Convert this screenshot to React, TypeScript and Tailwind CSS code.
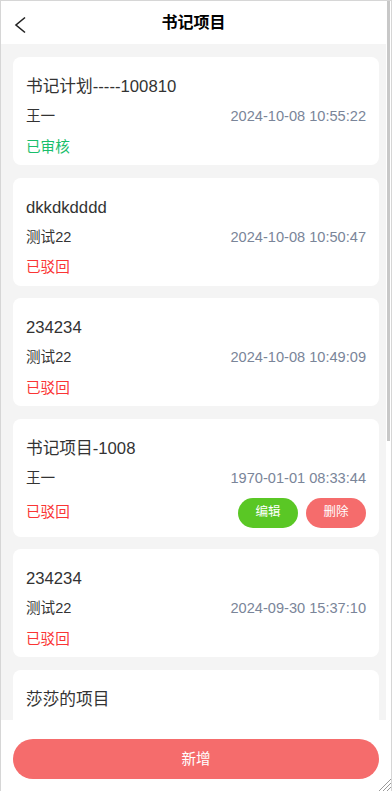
import { Fragment } from "react";

type Item = {
  id: number;
  title: string;
  name: string;
  time: string;
  status: "approved" | "rejected";
  editable?: boolean;
};

const items: Item[] = [
  { id: 1, title: "书记计划-----100810", name: "王一", time: "2024-10-08 10:55:22", status: "approved" },
  { id: 2, title: "dkkdkdddd", name: "测试22", time: "2024-10-08 10:50:47", status: "rejected" },
  { id: 3, title: "234234", name: "测试22", time: "2024-10-08 10:49:09", status: "rejected" },
  { id: 4, title: "书记项目-1008", name: "王一", time: "1970-01-01 08:33:44", status: "rejected", editable: true },
  { id: 5, title: "234234", name: "测试22", time: "2024-09-30 15:37:10", status: "rejected" },
  { id: 6, title: "莎莎的项目", name: "", time: "", status: "rejected" },
];

function StatusText({ status }: { status: Item["status"] }) {
  return status === "approved" ? (
    <span className="text-[14.6px] text-[#19be6b]">已审核</span>
  ) : (
    <span className="text-[14.6px] text-[#fa3534]">已驳回</span>
  );
}

function ProjectCard({ item }: { item: Item }) {
  return (
    <div
      className={
        item.editable
          ? "w-[366px] shrink-0 rounded-[8px] bg-white px-[13px] pt-[15px] pb-[5px]"
          : "w-[366px] shrink-0 rounded-[8px] bg-white px-[13px] pt-[15px] pb-[2px]"
      }
    >
      <div className="flex h-[30px] items-center text-[16.7px] text-[#333]">{item.title}</div>
      <div className="flex h-[30px] items-center justify-between">
        <span className="text-[14.6px] text-[#333]">{item.name}</span>
        <span className="text-[14.6px] text-[#7a8599]">{item.time}</span>
      </div>
      {item.editable ? (
        <div className="flex h-[38px] items-center justify-between">
          <StatusText status={item.status} />
          <div className="flex gap-[8px]">
            <button className="h-[30px] w-[60px] rounded-full bg-[#5ac725] text-[12.5px] text-white">
              编辑
            </button>
            <button className="h-[30px] w-[60px] rounded-full bg-[#f56c6c] text-[12.5px] text-white">
              删除
            </button>
          </div>
        </div>
      ) : (
        <div className="flex h-[31px] items-center">
          <StatusText status={item.status} />
        </div>
      )}
    </div>
  );
}

export default function App() {
  return (
    <div
      className="relative flex h-[791px] w-[392px] overflow-hidden border-t border-r border-l border-[#d6d6d6] bg-white"
      style={{ fontFamily: '"Liberation Sans", "Noto Sans CJK SC", sans-serif' }}
    >
      <div className="flex min-w-0 flex-1 flex-col">
        {/* header */}
        <div className="relative flex h-[43px] shrink-0 items-center justify-center bg-white">
          <svg
            className="absolute left-[13px] top-[15px]"
            width="12"
            height="18"
            viewBox="0 0 12 18"
            fill="none"
            stroke="#222"
            strokeWidth="1.6"
          >
            <path d="M11 1.5 L2 9 L11 16.5" />
          </svg>
          <span className="text-[16px] font-bold text-black">书记项目</span>
        </div>

        {/* list */}
        <div className="flex min-h-0 flex-1 flex-col gap-[12.5px] overflow-hidden bg-[#f4f4f4] pt-[13px] pl-[12px]">
          {items.map((item) => (
            <Fragment key={item.id}>
              <ProjectCard item={item} />
            </Fragment>
          ))}
        </div>

        {/* footer */}
        <div className="h-[71px] shrink-0 bg-white pt-[19px] pl-[12px]">
          <button className="h-[40px] w-[366px] rounded-full bg-[#f56c6c] pt-[2px] text-[14.6px] text-white">
            新增
          </button>
        </div>
      </div>

      {/* scrollbar */}
      <div className="w-[5px] shrink-0 bg-white pl-[1px]">
        <div className="h-[440px] w-[3px] bg-[#c8c8c8]" />
      </div>

      <svg className="absolute right-0 bottom-0" width="13" height="13" viewBox="0 0 13 13" stroke="#9a9a9a" strokeWidth="1">
        <path d="M13 1 L1 13 M13 5 L5 13 M13 9 L9 13" />
      </svg>
    </div>
  );
}
